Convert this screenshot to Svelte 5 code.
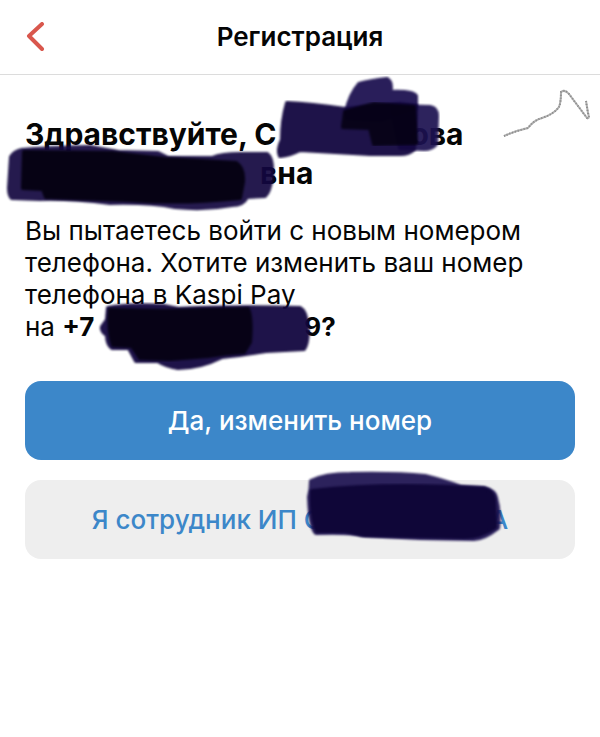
<script lang="ts">
  interface Stroke {
    d: string;
    fill: string;
    opacity?: number;
  }

  const INK = '#130740';
  const DARK = '#03000e';

  const strokes: Stroke[] = [
    // surname
    { d: 'M346 112 Q350 94 359 84 Q370 81 387 79 Q393 83 390 92 Q413 91 416 96 L416 108 L380 120 L347 118Z', fill: '#1c1150', opacity: 0.94 },
    { d: 'M391 106 L430 107 Q437 108 437 116 L436 144 Q432 149 424 149 L400 148Z', fill: '#1c1150', opacity: 0.92 },
    { d: 'M287 103 Q310 104 345 109 L400 104 L416 106 L414 149 Q409 154 400 154 L370 154 L300 150 Q290 155 280 156 Q277 150 282 140 Q282 120 287 103Z', fill: INK, opacity: 0.95 },
    { d: 'M345 112 L374 104 L414 107 L416 143 L374 144 L370 128 L343 127Z', fill: DARK, opacity: 0.8 },
    // patronymic
    { d: 'M22 150 Q45 148 90 147 L118 152 L158 153 L168 158 L212 158 Q222 154 240 154 L267 154 Q273 158 272 175 Q270 192 265 196 L247 197 Q243 205 232 205 Q205 210 175 207 Q150 202 110 203 Q70 198 40 199 L12 198 Q9 196 9 188 L11 157 Q14 152 22 150Z', fill: INK, opacity: 0.92 },
    { d: 'M24 152 L112 153 L165 159 L236 163 Q244 168 243 182 L240 198 Q180 204 130 200 L46 197 L43 189 L23 188Z', fill: DARK, opacity: 0.9 },
    // phone number
    { d: 'M108 308 Q130 304 164 306 L178 309 Q230 306 300 308 Q306 311 307 325 Q309 341 304 349 L266 351 Q240 355 222 357 Q200 368 178 368 Q166 366 158 361 L136 361 L129 348 L112 348 Q107 344 107 335 Q101 331 102 327 L107 320Z', fill: INK, opacity: 0.95 },
    { d: 'M110 310 L165 311 L248 309 Q252 318 250 342 L244 352 Q225 353 208 356 L170 359 L140 358 L132 346 L113 345 Q108 330 110 310Z', fill: DARK, opacity: 0.85 },
    // company name
    { d: 'M311 481 Q325 474 350 474 Q395 473 425 476 Q445 481 461 487 L484 488 Q495 491 496 498 Q500 512 498 528 Q484 539 474 539 L420 538 L362 535 Q352 532 316 533 Q310 528 309 497 Q311 490 311 481Z', fill: '#1c1150', opacity: 0.92 },
    { d: 'M312 491 Q390 482 484 489 Q493 491 494 500 L495 527 Q480 537 464 537 L365 535 L345 531 L317 531 Q311 515 312 491Z', fill: '#0f0638' },
  ];
</script>

<div class="screen">
  <header>
    <button class="back" type="button" aria-label="Назад">
      <svg viewBox="0 0 20 30" width="20" height="30" aria-hidden="true">
        <path d="M17 2 L4 14 L17 27" />
      </svg>
    </button>
    <h1>Регистрация</h1>
  </header>

  <main>
    <h2>
      Здравствуйте, С<span class="gap surname"></span>ова<br />
      <span class="gap patronymic"></span>вна
    </h2>
    <p>
      Вы пытаетесь войти с новым номером телефона. Хотите изменить ваш номер телефона в Kaspi Pay<br />
      на <b>+7<span class="gap phone"></span>9?</b>
    </p>
    <div class="actions">
      <button class="primary" type="button">Да, изменить номер</button>
      <button class="secondary" type="button">Я сотрудник ИП С<span class="gap company"></span>А</button>
    </div>
  </main>

  <svg class="ink" viewBox="0 0 600 600" width="600" height="600" aria-hidden="true">
    <defs>
      <filter id="soft" x="-5%" y="-5%" width="110%" height="110%" color-interpolation-filters="sRGB">
        <feGaussianBlur stdDeviation="1.3" />
      </filter>
    </defs>
    {#each strokes as stroke}
      <path
        class="stroke"
        d={stroke.d}
        fill={stroke.fill}
        stroke={stroke.fill}
        opacity={stroke.opacity ?? 1}
        filter="url(#soft)"
      />
    {/each}
    <path class="pencil" d="M504 136 Q515 131 528 128 Q534 120 542 118 Q554 114 559 107 Q561 102 561 92 Q565 89 569 94 L587 118 Q590 119 588 113 L586 101" />
    <path class="pencil grain" d="M504 136 Q515 131 528 128 Q534 120 542 118 Q554 114 559 107 Q561 102 561 92 Q565 89 569 94 L587 118 Q590 119 588 113 L586 101" />
  </svg>
</div>

<style>
  :global(body) {
    margin: 0;
    background: #fff;
  }

  .screen {
    position: relative;
    overflow: hidden;
    min-height: 100vh;
    background: #fff;
    color: #050505;
    font-family: Inter, "Noto Sans", sans-serif;
  }

  header {
    display: grid;
    grid-template-columns: 64px 1fr 64px;
    align-items: center;
    height: 74px;
    border-bottom: 1px solid #dcdcdc;
  }

  button {
    border: 0;
    font: inherit;
    cursor: pointer;
  }

  .back {
    display: flex;
    padding: 0 0 0 25px;
    background: none;
  }

  .back path {
    fill: none;
    stroke: #d9574d;
    stroke-width: 4;
    stroke-linecap: round;
    stroke-linejoin: round;
  }

  h1 {
    margin: 0;
    font-size: 26px;
    font-weight: 600;
    line-height: 32px;
    text-align: center;
  }

  main {
    padding: 40px 25px;
  }

  h2 {
    margin: 0;
    font-size: 30px;
    font-weight: 700;
    line-height: 39px;
    white-space: nowrap;
  }

  p {
    margin: 22px 0 0;
    font-size: 26px;
    line-height: 32px;
  }

  .gap {
    display: inline-block;
  }

  .surname {
    width: 134px;
  }

  .patronymic {
    width: 235px;
  }

  .phone {
    width: 210px;
  }

  .company {
    width: 167px;
  }

  .actions {
    display: grid;
    gap: 20px;
    margin-top: 38px;
  }

  .actions button {
    min-height: 79px;
    border-radius: 16px;
    font-size: 26px;
    font-weight: 500;
    line-height: 32px;
  }

  .primary {
    background: #3c87c9;
    color: #fff;
  }

  .secondary {
    background: #eee;
    color: #3c87c9;
  }

  .ink {
    position: absolute;
    top: 0;
    left: 0;
    pointer-events: none;
  }

  .stroke {
    stroke-width: 4;
    stroke-linejoin: round;
  }

  .pencil {
    fill: none;
    stroke: #b0b0b0;
    stroke-width: 2;
    stroke-linejoin: round;
  }

  .grain {
    stroke: #8a8a8a;
    stroke-dasharray: 1 2;
  }
</style>
